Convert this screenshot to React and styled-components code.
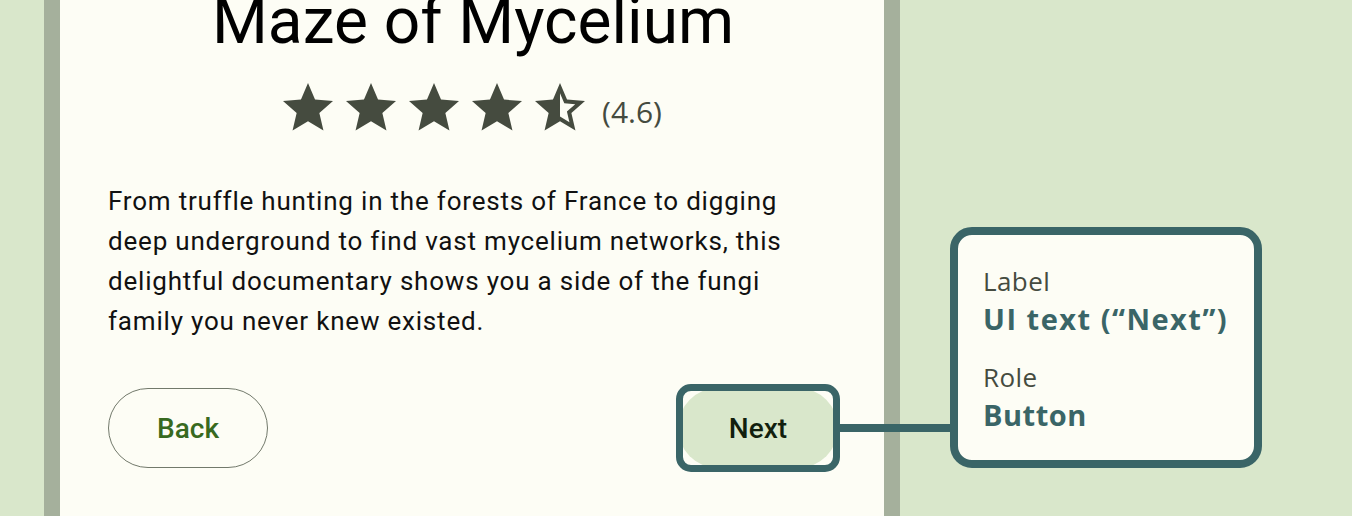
import React from 'react';
import styled, { createGlobalStyle } from 'styled-components';

const GlobalStyle = createGlobalStyle`
  html, body {
    margin: 0;
    padding: 0;
    background: #d9e7cb;
  }
  * { box-sizing: border-box; }
`;

const Page = styled.div`
  display: flex;
  width: 1352px;
  height: 516px;
  overflow: hidden;
  background: #d9e7cb;
  padding-left: 44px;
`;

const Card = styled.div`
  position: relative;
  flex: 0 0 856px;
  height: 100%;
  border-left: 16px solid #a5b09c;
  border-right: 16px solid #a5b09c;
  background: #fdfdf5;
  display: flex;
  flex-direction: column;
  padding: 0 46px 0 48px;
`;

const Title = styled.h1`
  margin: -14px 0 0;
  font-family: Roboto, sans-serif;
  font-weight: 400;
  font-size: 64px;
  line-height: 72px;
  color: #000;
  text-align: center;
`;

const RatingRow = styled.div`
  display: flex;
  align-items: center;
  justify-content: center;
  margin: 20px 6px 0 0;
  gap: 12px;
`;

const Stars = styled.div`
  display: flex;
  gap: 3px;
  color: #454b3f;
`;

const RatingValue = styled.span`
  font-family: "Open Sans", sans-serif;
  font-size: 30px;
  color: #454b3f;
  margin-top: 6px;
`;

const Description = styled.p`
  margin: 43px 0 0;
  max-width: 710px;
  font-family: Roboto, sans-serif;
  font-size: 26px;
  line-height: 40px;
  letter-spacing: 0.8px;
  color: #111;
`;

const Actions = styled.div`
  display: flex;
  justify-content: space-between;
  align-items: center;
  margin-top: 47px;
`;

const PillButton = styled.button`
  width: 160px;
  height: 80px;
  border-radius: 40px;
  font-family: Roboto, sans-serif;
  font-weight: 500;
  font-size: 28px;
  cursor: pointer;
  border: ${p => (p.$tonal ? 'none' : '1.5px solid #72796b')};
  background: ${p => (p.$tonal ? '#d9e7cb' : 'transparent')};
  color: ${p => (p.$tonal ? '#121f0e' : '#386a20')};
`;

const Focused = styled.div`
  position: relative;
`;

const FocusRing = styled.div`
  position: absolute;
  top: -4px;
  bottom: -4px;
  left: -2px;
  right: -2px;
  border: 7px solid #3a6567;
  border-radius: 15px;
  pointer-events: none;
`;

const Connector = styled.div`
  position: absolute;
  left: 100%;
  top: 33px;
  width: 120px;
  height: 8px;
  background: #3a6567;
`;

const Side = styled.div`
  display: flex;
  align-items: flex-end;
  padding: 0 0 48px 50px;
`;

const InfoBox = styled.div`
  width: 312px;
  height: 241px;
  border: 8px solid #3a6567;
  border-radius: 22px;
  background: #fdfdf5;
  padding: 30px 10px 0 25px;
  display: flex;
  flex-direction: column;
`;

const InfoLabel = styled.div`
  font-family: "Open Sans", sans-serif;
  font-size: 26px;
  line-height: 32px;
  letter-spacing: 0.4px;
  color: #454b3f;
  margin-top: ${p => (p.$first ? '0' : '24px')};
`;

const InfoValue = styled.div`
  margin-top: 4px;
  font-family: "Open Sans", sans-serif;
  font-weight: 700;
  font-size: 29px;
  line-height: 36px;
  letter-spacing: ${p => p.$spacing || '0.9px'};
  white-space: nowrap;
  color: #3a6567;
`;

const Star = () => (
  <svg width="60" height="60" viewBox="0 0 24 24" fill="currentColor">
    <path d="M12 17.27L18.18 21l-1.64-7.03L22 9.24l-7.19-.61L12 2 9.19 8.63 2 9.24l5.46 4.73L5.82 21z" />
  </svg>
);

const HalfStar = () => (
  <svg width="60" height="60" viewBox="0 0 24 24" fill="currentColor">
    <path d="M22 9.24l-7.19-.62L12 2 9.19 8.63 2 9.24l5.46 4.73L5.82 21 12 17.27 18.18 21l-1.63-7.03L22 9.24zM12 15.4V6.1l1.71 4.04 4.38.38-3.32 2.88 1 4.28L12 15.4z" />
  </svg>
);

export default function App() {
  return (
    <>
      <GlobalStyle />
      <Page>
        <Card>
          <Title>Maze of Mycelium</Title>
          <RatingRow>
            <Stars>
              <Star />
              <Star />
              <Star />
              <Star />
              <HalfStar />
            </Stars>
            <RatingValue>(4.6)</RatingValue>
          </RatingRow>
          <Description>
            From truffle hunting in the forests of France to digging deep underground to find vast
            mycelium networks, this delightful documentary shows you a side of the fungi family you
            never knew existed.
          </Description>
          <Actions>
            <PillButton>Back</PillButton>
            <Focused>
              <PillButton $tonal>Next</PillButton>
              <FocusRing>
                <Connector />
              </FocusRing>
            </Focused>
          </Actions>
        </Card>
        <Side>
          <InfoBox>
            <InfoLabel $first>Label</InfoLabel>
            <InfoValue $spacing="1.5px">UI text (“Next”)</InfoValue>
            <InfoLabel>Role</InfoLabel>
            <InfoValue $spacing="0.5px">Button</InfoValue>
          </InfoBox>
        </Side>
      </Page>
    </>
  );
}
